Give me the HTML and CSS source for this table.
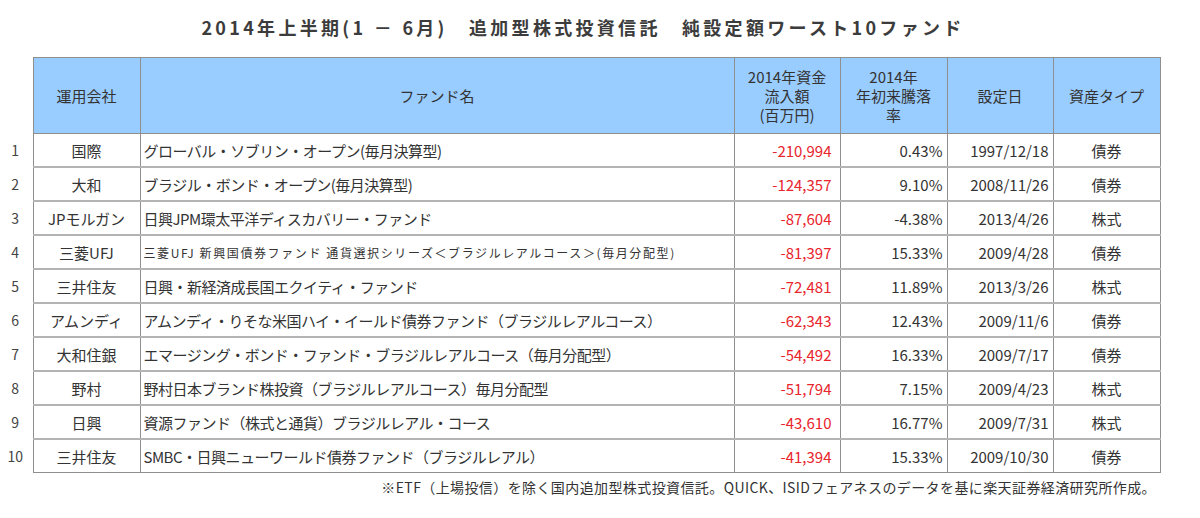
FILE: index.html
```html
<!DOCTYPE html>
<html lang="ja">
<head>
<meta charset="utf-8">
<link rel="stylesheet" href="styles.css">
</head>
<body>
<div class="page">
  <h1 class="title">2014年上半期(1 － 6月)　追加型株式投資信託　純設定額ワースト10ファンド</h1>
  <table class="tbl">
    <colgroup>
      <col class="c-num"><col class="c-co"><col class="c-fund"><col class="c-amt"><col class="c-pct"><col class="c-date"><col class="c-type">
    </colgroup>
    <thead>
      <tr>
        <th class="num"></th>
        <th>運用会社</th>
        <th>ファンド名</th>
        <th>2014年資金<br>流入額<br>(百万円)</th>
        <th>2014年<br>年初来騰落<br>率</th>
        <th>設定日</th>
        <th>資産タイプ</th>
      </tr>
    </thead>
    <tbody>
      <tr><td class="num">1</td><td class="co">国際</td><td class="fund">グローバル・ソブリン・オープン(毎月決算型)</td><td class="amt">-210,994</td><td class="pct">0.43%</td><td class="date">1997/12/18</td><td class="type">債券</td></tr>
      <tr><td class="num">2</td><td class="co">大和</td><td class="fund">ブラジル・ボンド・オープン(毎月決算型)</td><td class="amt">-124,357</td><td class="pct">9.10%</td><td class="date">2008/11/26</td><td class="type">債券</td></tr>
      <tr><td class="num">3</td><td class="co">JPモルガン</td><td class="fund">日興JPM環太平洋ディスカバリー・ファンド</td><td class="amt">-87,604</td><td class="pct">-4.38%</td><td class="date">2013/4/26</td><td class="type">株式</td></tr>
      <tr><td class="num">4</td><td class="co">三菱UFJ</td><td class="fund small">三菱UFJ 新興国債券ファンド 通貨選択シリーズ＜ブラジルレアルコース＞(毎月分配型)</td><td class="amt">-81,397</td><td class="pct">15.33%</td><td class="date">2009/4/28</td><td class="type">債券</td></tr>
      <tr><td class="num">5</td><td class="co">三井住友</td><td class="fund">日興・新経済成長国エクイティ・ファンド</td><td class="amt">-72,481</td><td class="pct">11.89%</td><td class="date">2013/3/26</td><td class="type">株式</td></tr>
      <tr><td class="num">6</td><td class="co">アムンディ</td><td class="fund">アムンディ・りそな米国ハイ・イールド債券ファンド（ブラジルレアルコース）</td><td class="amt">-62,343</td><td class="pct">12.43%</td><td class="date">2009/11/6</td><td class="type">債券</td></tr>
      <tr><td class="num">7</td><td class="co">大和住銀</td><td class="fund">エマージング・ボンド・ファンド・ブラジルレアルコース（毎月分配型）</td><td class="amt">-54,492</td><td class="pct">16.33%</td><td class="date">2009/7/17</td><td class="type">債券</td></tr>
      <tr><td class="num">8</td><td class="co">野村</td><td class="fund">野村日本ブランド株投資（ブラジルレアルコース）毎月分配型</td><td class="amt">-51,794</td><td class="pct">7.15%</td><td class="date">2009/4/23</td><td class="type">株式</td></tr>
      <tr><td class="num">9</td><td class="co">日興</td><td class="fund">資源ファンド（株式と通貨）ブラジルレアル・コース</td><td class="amt">-43,610</td><td class="pct">16.77%</td><td class="date">2009/7/31</td><td class="type">株式</td></tr>
      <tr><td class="num">10</td><td class="co">三井住友</td><td class="fund">SMBC・日興ニューワールド債券ファンド（ブラジルレアル）</td><td class="amt">-41,394</td><td class="pct">15.33%</td><td class="date">2009/10/30</td><td class="type">債券</td></tr>
    </tbody>
  </table>
  <p class="note">※ETF（上場投信）を除く国内追加型株式投資信託。QUICK、ISIDフェアネスのデータを基に楽天証券経済研究所作成。</p>
</div>
</body>
</html>
```
FILE: styles.css
```css
html, body {
  margin: 0;
  padding: 0;
  background: #ffffff;
}
body {
  font-family: "Noto Sans CJK JP", "Liberation Sans", sans-serif;
  color: #333333;
}
.page {
  width: 1200px;
  padding-top: 13px;
}
.title {
  margin: 0 0 16px 0;
  padding-right: 34px;
  text-align: center;
  font-size: 18px;
  font-weight: 700;
  line-height: 28px;
  color: #3c3c3c;
  letter-spacing: 3.3px;
}
.tbl {
  border-collapse: collapse;
  table-layout: fixed;
  width: 1160px;
  font-size: 15px;
}
.c-num { width: 33px; }
.c-co { width: 107px; }
.c-fund { width: 594px; }
.c-amt { width: 106px; }
.c-pct { width: 107px; }
.c-date { width: 106px; }
.c-type { width: 107px; }
.tbl th {
  background: #99ccff;
  font-weight: 400;
  height: 75px;
  line-height: 19px;
  font-size: 15px;
  color: #333333;
  border: 1px solid #8f8f8f;
  padding: 0;
  vertical-align: middle;
}
.tbl td {
  height: 32px;
  padding: 0;
  border-left: 1px solid #8f8f8f;
  border-right: 1px solid #8f8f8f;
  border-bottom: 2px solid #b4b4b4;
  white-space: nowrap;
  overflow: hidden;
  vertical-align: middle;
}
.tbl th.num, .tbl td.num {
  background: transparent;
  border: none;
  text-align: center;
  color: #444444;
  font-size: 14px;
}
.tbl td.num { padding-right: 2px; }
.tbl tbody tr:last-child td:not(.num) {
  border-bottom: 1px solid #8f8f8f;
}
.co {
  text-align: center;
}
.fund {
  text-align: left;
  padding-left: 3px !important;
  letter-spacing: -0.5px;
}
.fund.small {
  font-size: 12px;
  letter-spacing: 1.6px;
}
.amt {
  text-align: right;
  padding-right: 8px !important;
  color: #e8242c;
}
.pct {
  text-align: right;
  padding-right: 4px !important;
}
.date {
  text-align: right;
  padding-right: 4px !important;
}
.type {
  text-align: center;
}
.note {
  margin: 4px 0 0 0;
  width: 1156px;
  text-align: right;
  font-size: 14px;
  line-height: 20px;
  letter-spacing: 0.4px;
  color: #333333;
}
```
